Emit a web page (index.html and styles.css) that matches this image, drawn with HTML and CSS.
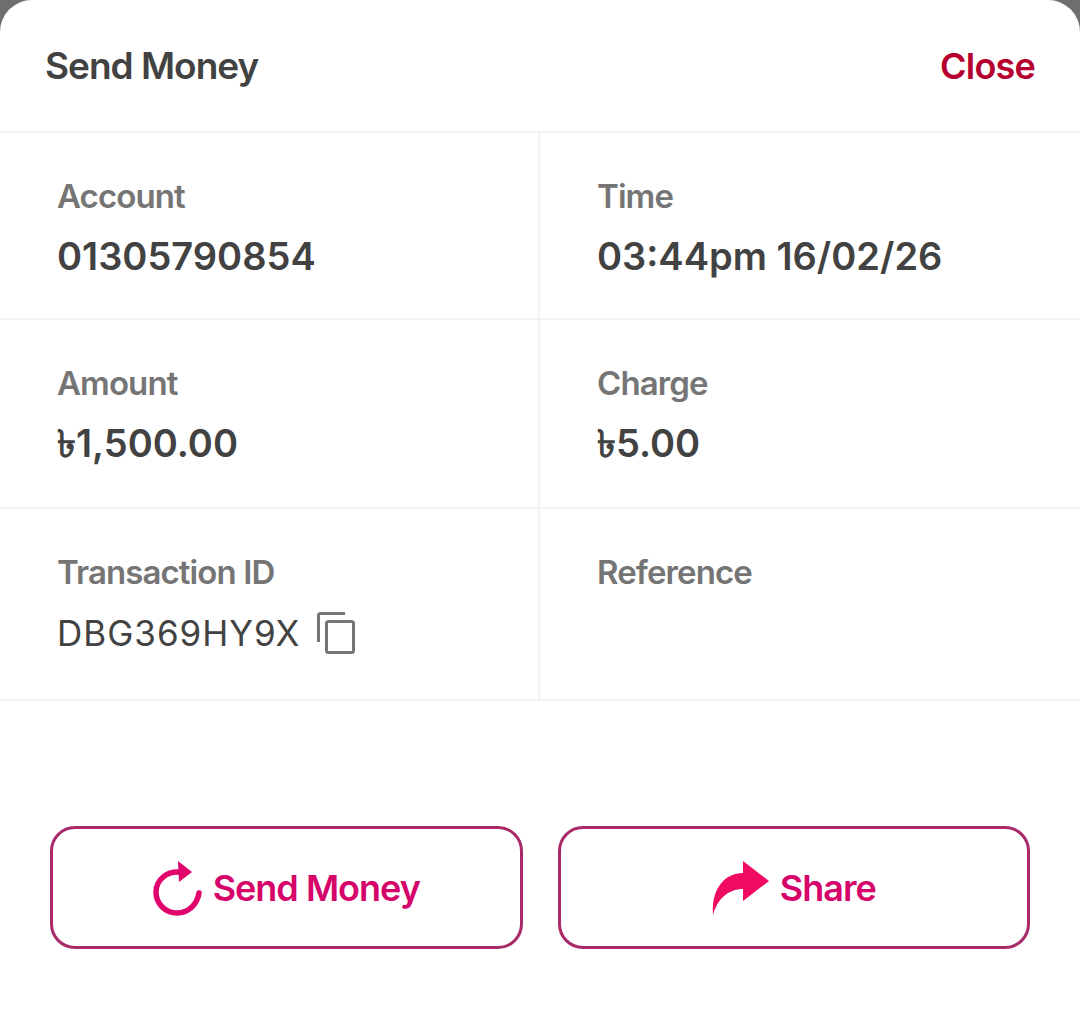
FILE: index.html
```html
<!DOCTYPE html>
<html lang="en">

<head>
    <meta charset="UTF-8">
    <meta name="viewport" content="width=device-width, initial-scale=1.0">
    <title>Send Money</title>
    <link rel="stylesheet" href="styles.css">
</head>

<body>

    <div class="sheet">
        <header class="sheet-header">
            <h1>Send Money</h1>
            <a class="close-link" href="#">Close</a>
        </header>

        <div class="details">
            <div class="cell">
                <div class="label">Account</div>
                <div class="value">01305790854</div>
            </div>
            <div class="cell">
                <div class="label">Time</div>
                <div class="value">03:44pm 16/02/26</div>
            </div>
            <div class="cell">
                <div class="label">Amount</div>
                <div class="value">৳1,500.00</div>
            </div>
            <div class="cell">
                <div class="label">Charge</div>
                <div class="value">৳5.00</div>
            </div>
            <div class="cell cell-last">
                <div class="label">Transaction ID</div>
                <div class="trx-row">
                    <span class="trx-id">DBG369HY9X</span>
                    <svg class="copy-icon" viewBox="0 0 38 42" fill="none" stroke="#757575" stroke-width="3">
                        <path d="M1.5 30V3a1.5 1.5 0 0 1 1.5-1.5h25"/>
                        <rect x="9.5" y="9.5" width="27" height="31" rx="2"/>
                    </svg>
                </div>
            </div>
            <div class="cell cell-last">
                <div class="label">Reference</div>
            </div>
        </div>

        <div class="actions">
            <button type="button" class="action-btn">
                <svg class="btn-icon" viewBox="0 0 50 56" fill="none">
                    <path d="M29 12.5C14 10 3 20 3 32c0 12 9.500 21 21 21 11 0 20-8 22-20" stroke="#e0046c" stroke-width="5.500" stroke-linecap="round"/>
                    <path d="M25 1l14 11-13 10z" fill="#e0046c"/>
                </svg>
                Send Money
            </button>
            <button type="button" class="action-btn">
                <svg class="btn-icon share-icon" viewBox="0 0 58 56">
                    <path d="M31 1l26 20-26 20V29C18 29 6 37 1 55 -1 30 12 13 31 13z" fill="#f00a62"/>
                </svg>
                Share
            </button>
        </div>
    </div>

</body>
</html>
```
FILE: styles.css
```css
html,
body {
    margin: 0;
    height: 100%;
    background-color: #6f6f6f;
}

body {
    font-family: 'Inter', 'Noto Sans', 'DejaVu Sans', sans-serif;
    color: #424242;
}

.sheet {
    background-color: #fff;
    border-radius: 32px 32px 0 0;
    height: 1028px;
    box-sizing: border-box;
}

.sheet-header {
    display: flex;
    justify-content: space-between;
    align-items: center;
    height: 133px;
    padding: 0 45px;
    box-sizing: border-box;
    border-bottom: 2px solid #f3f3f3;
}

.sheet-header h1 {
    margin: 0;
    font-size: 37px;
    font-weight: 600;
    letter-spacing: -1px;
}

.close-link {
    color: #b5002f;
    font-size: 36px;
    font-weight: 600;
    letter-spacing: -0.8px;
    text-decoration: none;
}

.details {
    display: grid;
    grid-template-columns: 540px 540px;
    grid-template-rows: 187px 189px 192px;
}

.cell {
    box-sizing: border-box;
    padding: 43px 0 0 57px;
    border-bottom: 2px solid #f3f3f3;
}

.cell:nth-child(odd) {
    border-right: 2px solid #f3f3f3;
}

.label {
    color: #757575;
    font-size: 33px;
    font-weight: 600;
    line-height: 40px;
    letter-spacing: -0.9px;
}

.value {
    margin-top: 18px;
    font-size: 38px;
    font-weight: 600;
    line-height: 44px;
}

.trx-row {
    display: flex;
    align-items: center;
    margin-top: 20px;
}

.trx-id {
    font-size: 35px;
    font-weight: 400;
    letter-spacing: 1px;
}

.copy-icon {
    width: 38px;
    height: 42px;
    margin-left: 17px;
}

.actions {
    display: flex;
    gap: 35px;
    padding: 125px 50px 0;
}

.action-btn {
    flex: 1;
    height: 123px;
    display: flex;
    align-items: center;
    justify-content: center;
    gap: 10px;
    background-color: #fff;
    border: 3px solid #a92a68;
    border-radius: 25px;
    color: #d6046a;
    font-family: inherit;
    font-size: 36px;
    font-weight: 600;
    letter-spacing: -1px;
}

.btn-icon {
    width: 50px;
    height: 56px;
}

.share-icon {
    width: 58px;
}
```
